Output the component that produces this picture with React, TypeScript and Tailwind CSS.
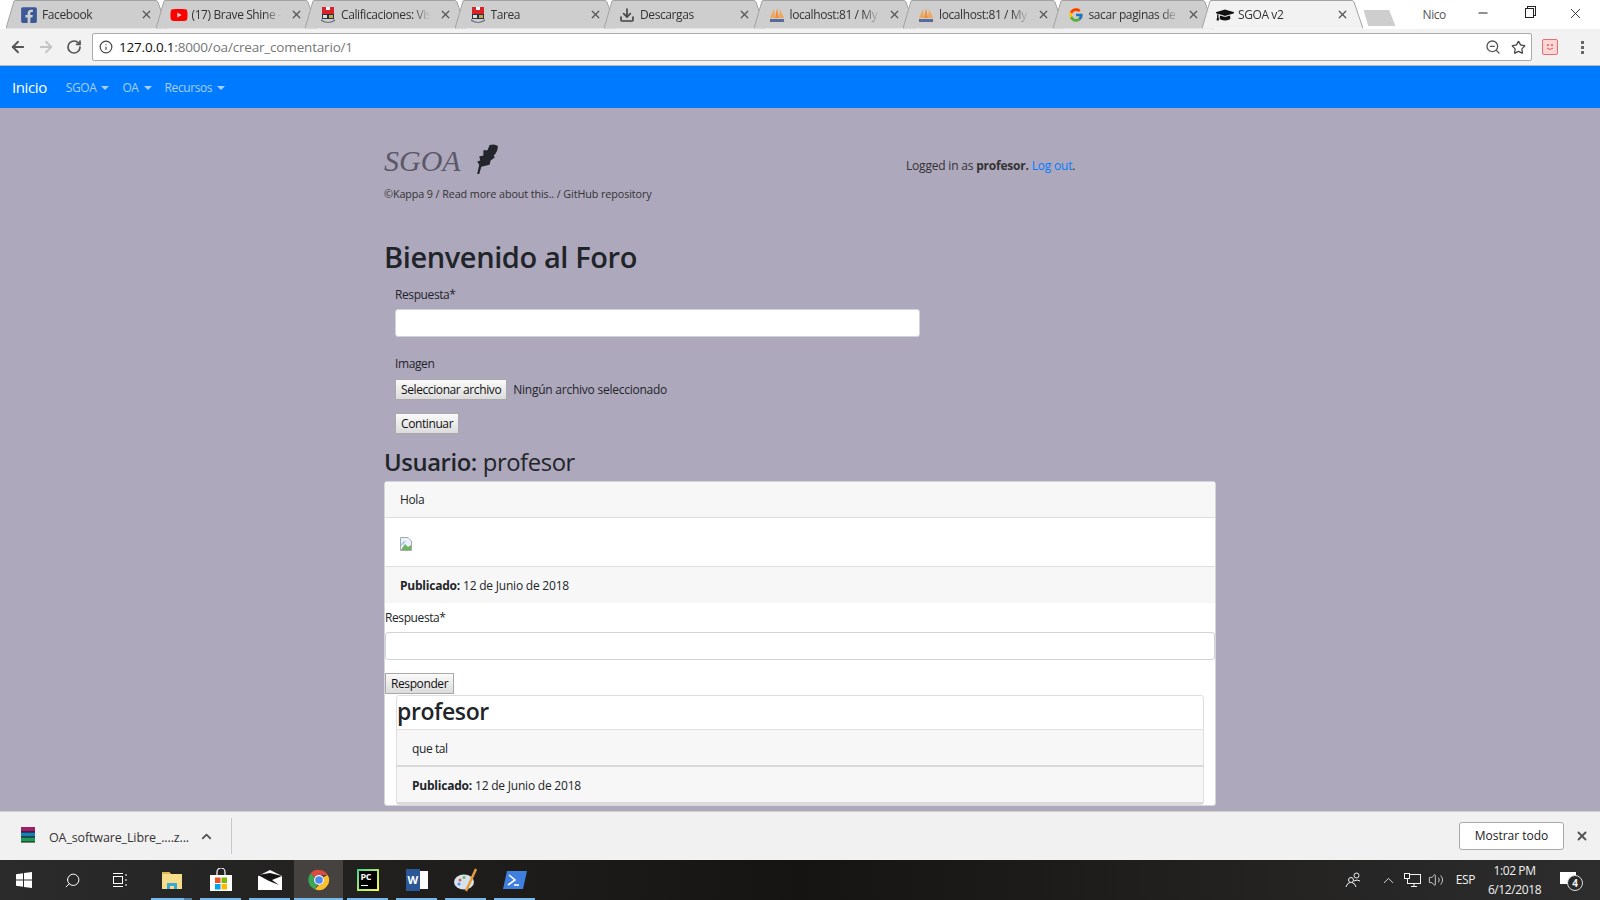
import React from 'react';
import { FaFacebookSquare, FaGraduationCap, FaYoutube } from 'react-icons/fa';
import { FcGoogle } from 'react-icons/fc';
import { ArrowLeft, ArrowRight, ChevronUp, Download, Info, RotateCw, Search, Star, Volume2, X, Minus, ZoomOut } from 'lucide-react';

function EspolIcon() {
  return (
    <svg width="16" height="18" viewBox="0 0 16 18">
      <rect x="2" y="1" width="12" height="7" fill="#d8232a" />
      <rect x="6" y="1" width="4" height="3" fill="#f4f4f4" />
      <rect x="2" y="8" width="12" height="5" fill="#24334f" />
      <rect x="3" y="9" width="4" height="3" fill="#e4e0c8" />
      <rect x="9" y="9" width="4" height="3" fill="#cfa93a" />
      <path d="M1 13 Q8 19 15 13 L15 15 Q8 19 1 15 Z" fill="#6e7780" />
    </svg>
  );
}

function PmaIcon() {
  return (
    <svg width="16" height="16" viewBox="0 0 16 16">
      <path d="M1 11 L5 2 L6 11 Z" fill="#f2a65a" />
      <path d="M6 11 L8 1 L10 11 Z" fill="#ef8f3c" />
      <path d="M10 11 L11 2 L15 11 Z" fill="#f2a65a" />
      <rect x="1" y="12" width="14" height="3" fill="#5a6a9a" />
    </svg>
  );
}

const tabs = [
  { title: 'Facebook', icon: <FaFacebookSquare size={18} color="#3b5998" /> },
  { title: '(17) Brave Shine -', icon: <FaYoutube size={18} color="#ff0000" /> },
  { title: 'Calificaciones: Vis', icon: <EspolIcon /> },
  { title: 'Tarea', icon: <EspolIcon /> },
  { title: 'Descargas', icon: <Download size={16} color="#444" strokeWidth={2.5} /> },
  { title: 'localhost:81 / My', icon: <PmaIcon /> },
  { title: 'localhost:81 / My', icon: <PmaIcon /> },
  { title: 'sacar paginas de', icon: <FcGoogle size={16} /> },
  { title: 'SGOA v2', icon: <FaGraduationCap size={18} color="#111" />, active: true },
];

function Tab({ title, icon, active }: { title: string; icon: React.ReactNode; active?: boolean }) {
  return (
    <div className="relative w-[161px] h-[29px] mr-[-11.5px] shrink-0 flex items-center pl-[14px] pr-[14px]">
      <svg className="absolute inset-0" width="161" height="29" viewBox="0 0 161 29">
        <path
          d="M0 28.5 L8 1 Q8.5 0.5 10 0.5 L150 0.5 Q151 0.5 152 2 L161 28.5"
          fill={active ? '#f2f2f2' : '#cecece'}
          stroke="#a3a3a3"
          strokeWidth="1"
        />
      </svg>
      <div className="relative w-[18px] flex justify-center shrink-0">{icon}</div>
      <span className="relative ml-[4px] w-[90px] whitespace-nowrap overflow-hidden text-[12px] text-[#333] [mask-image:linear-gradient(to_right,black_80%,transparent)]">
        {title}
      </span>
      <X className="relative ml-auto text-[#555]" size={13} strokeWidth={2.2} />
    </div>
  );
}

function TabStrip() {
  return (
    <div className="h-[29px] bg-white flex pl-[6px] relative shrink-0">
      {tabs.map((t, i) => (
        <Tab key={i} title={t.title} icon={t.icon} active={t.active} />
      ))}
      <div className="ml-[12px] mt-[10px] w-[32px] h-[16px] bg-[#cecece] [clip-path:polygon(0_0,80%_0,100%_100%,15%_100%)]" />
      <span className="ml-[27px] mt-[6px] text-[12px] text-[#555]">Nico</span>
      <div className="ml-auto flex items-start h-[29px] pr-[2px]">
        <div className="w-[46px] flex justify-center pt-[6px]"><Minus size={14} color="#222" /></div>
        <div className="w-[46px] flex justify-center pt-[8px]">
          <div className="w-[9px] h-[10px] border border-[#222] shadow-[2px_-2px_0_-1px_#fff,2px_-2px_0_0_#222]" />
        </div>
        <div className="w-[46px] flex justify-center pt-[5px]"><X size={17} color="#222" strokeWidth={1.2} /></div>
      </div>
    </div>
  );
}

function Toolbar() {
  return (
    <div className="h-[37px] shrink-0 bg-[#f2f2f2] border-b border-[#b8b8b8] flex items-center">
      <div className="w-[92px] flex items-center pl-[9px] gap-[10px]">
        <ArrowLeft size={18} color="#555" strokeWidth={2.4} />
        <ArrowRight size={18} color="#c4c4c4" strokeWidth={2.4} />
        <RotateCw size={16} color="#555" strokeWidth={2.6} className="ml-[1px]" />
      </div>
      <div className="w-[1440px] h-[28px] bg-white border border-[#ababab] rounded-[2px] flex items-center pl-[6px] pr-[5px]">
        <Info size={14} color="#444" />
        <span className="ml-[6px] text-[13.5px] tracking-[-0.18px] text-[#111]">
          127.0.0.1<span className="text-[#777]">:8000/oa/crear_comentario/1</span>
        </span>
        <div className="ml-auto flex items-center gap-[10px]">
          <ZoomOut size={16} color="#555" strokeWidth={2} />
          <Star size={15} color="#444" strokeWidth={2} />
        </div>
      </div>
      <div className="ml-[10px] w-[16px] h-[16px] border border-[#ee6b6b] bg-[#fbd7d7] rounded-[2px] flex items-center justify-center">
        <svg width="10" height="8" viewBox="0 0 10 8">
          <circle cx="3" cy="2" r="1" fill="#e25555" />
          <circle cx="7" cy="2" r="1" fill="#e25555" />
          <path d="M2 5 Q5 8 8 5" stroke="#e25555" fill="none" />
        </svg>
      </div>
      <div className="ml-[23px] flex flex-col gap-[2px]">
        <span className="w-[3px] h-[3px] bg-[#666]" />
        <span className="w-[3px] h-[3px] bg-[#666]" />
        <span className="w-[3px] h-[3px] bg-[#666]" />
      </div>
    </div>
  );
}

function NavDropdown({ label }: { label: string }) {
  return (
    <a className="flex items-center text-[12px] text-[#a6cffb]">
      {label}
      <span className="ml-[5px] w-0 h-0 border-x-[4px] border-x-transparent border-t-[4px] border-t-[#a6cffb]" />
    </a>
  );
}

function Navbar() {
  return (
    <nav className="h-[42px] shrink-0 bg-[#007bff] flex items-center pl-[12px] pt-[2px]">
      <a className="text-[15px] text-white mr-[19px] -mt-[2px]">Inicio</a>
      <div className="flex items-center gap-[13px]">
        <NavDropdown label="SGOA" />
        <NavDropdown label="OA" />
        <NavDropdown label="Recursos" />
      </div>
    </nav>
  );
}

function FormButton({ children }: { children: React.ReactNode }) {
  return (
    <button className="h-[21px] px-[5px] text-[12px] text-[#111] border border-[#a9a9a9] bg-linear-to-b from-[#fafafa] to-[#dcdcdc] whitespace-nowrap">
      {children}
    </button>
  );
}

function BrokenImage() {
  return (
    <svg width="12" height="14" viewBox="0 0 12 14">
      <path d="M0.5 0.5 H8 L11.5 4 V13.5 H0.5 Z" fill="#eaf1fb" stroke="#a8a8a8" />
      <path d="M1 13 L5 7 L8 10 L11 8 V13 Z" fill="#6cb45f" />
      <path d="M1 7 L4 4 L6 5 L1 9 Z" fill="#a9c8ee" />
    </svg>
  );
}

function Published({ className }: { className?: string }) {
  return (
    <div className={`text-[12px] tracking-[-0.018em] text-[#212529] ${className}`}>
      <b>Publicado:</b> 12 de Junio de 2018
    </div>
  );
}

function ForoPage() {
  return (
    <main className="flex-1 bg-[#aea8bd] overflow-hidden text-[#212529]">
      <div className="w-[832px] mx-auto">
        <header className="flex pt-[32px] h-[100px]">
          <div className="w-[522px]">
            <div className="flex items-start h-[42px]">
              <span className="text-[30px] leading-[42px] italic tracking-normal text-[#5b5868] [font-family:'Liberation_Serif',serif]">SGOA</span>
              <svg className="ml-[15px] mt-[4px]" width="22" height="30" viewBox="0 0 21 29" fill="#22262c">
                <path d="M1 29 L3 20 L1 17 L4 16 L3 12 L7 11 L7 6 L11 6 L13 1 Q18 -0.5 21 2 Q21 8 17 11 L18 13 L14 16 L13 20 L9 21 L5 22 L3 29 Z" />
              </svg>
            </div>
            <p className="text-[10.8px] mt-[4px] tracking-[-0.01em] text-[#333]">©Kappa 9 / Read more about this.. / GitHub repository</p>
          </div>
          <p className="text-[12px] mt-[17px] tracking-[-0.2px] text-[#333]">
            Logged in as <b>profesor.</b> <a className="text-[#007bff]">Log out</a>.
          </p>
        </header>

        <h2 className="text-[29px] leading-[36px] font-semibold mt-[31px]">Bienvenido al Foro</h2>

        <form className="pl-[11px] w-[536px]">
          <label className="block text-[12px] mt-[11px] leading-[18px]">Respuesta*</label>
          <input className="block w-[525px] h-[28px] mt-[5px] bg-white border border-[#ced4da] rounded-[3px]" />
          <label className="block text-[12px] mt-[18px] leading-[18px]">Imagen</label>
          <div className="flex items-center mt-[6px] text-[12px]">
            <FormButton>Seleccionar archivo</FormButton>
            <span className="ml-[6px] tracking-[-0.02em]">Ningún archivo seleccionado</span>
          </div>
          <div className="flex mt-[13px]">
            <FormButton>Continuar</FormButton>
          </div>
        </form>

        <h4 className="text-[23.8px] leading-[28px] mt-[14px]"><b className="font-semibold">Usuario:</b> profesor</h4>

        <section className="mt-[5px] h-[325px] bg-white border border-[#d6d5da] rounded-[3px] overflow-hidden">
          <div className="h-[36px] bg-[#f7f7f7] border-b border-[#dcdcdc] flex items-center pl-[15px] text-[12px]">Hola</div>
          <div className="h-[48px] flex items-center pl-[15px] pt-[3px]"><BrokenImage /></div>
          <Published className="h-[37px] bg-[#f7f7f7] border-t border-[#e0e0e0] flex items-center gap-[3px] pl-[15px] pt-[2px]" />

          <label className="block text-[12px] mt-[6px] leading-[18px]">Respuesta*</label>
          <input className="block w-full h-[28px] mt-[5px] bg-white border border-[#ced4da] rounded-[3px]" />
          <div className="flex mt-[13px] h-[22px]">
            <FormButton>Responder</FormButton>
          </div>

          <div className="mx-[11px] border border-[#dedede] rounded-[3px] h-[110px]">
            <h3 className="text-[23px] leading-[30px] h-[34px] font-semibold border-b border-[#e0e0e0] text-[#212529]">profesor</h3>
            <div className="h-[37px] bg-[#f7f7f7] border-b-2 border-[#dadada] flex items-center pl-[15px] pt-[2px] text-[12px]">que tal</div>
            <Published className="h-[37px] bg-[#f7f7f7] border-b-2 border-[#dadada] flex items-center gap-[3px] pl-[15px] pt-[2px]" />
          </div>
        </section>
      </div>
    </main>
  );
}

function DownloadBar() {
  return (
    <div className="h-[49px] shrink-0 bg-[#f1f1f1] border-t border-[#d0d0d0] flex items-center">
      <svg className="ml-[20px] mb-[3px]" width="16" height="17" viewBox="0 0 16 17">
        <rect x="1" y="1" width="14" height="5" fill="#9b1f6b" />
        <rect x="1" y="6" width="14" height="5" fill="#1a7fb8" />
        <rect x="1" y="11" width="14" height="5" fill="#1f9b57" />
        <path d="M1 6H15M1 11H15M1 16H15" stroke="#111" />
      </svg>
      <span className="ml-[13px] w-[140px] pt-[5px] text-[12.5px] tracking-[-0.01em] text-[#333]">OA_software_Libre_....z...</span>
      <ChevronUp className="ml-[10px]" size={15} color="#555" strokeWidth={3} />
      <div className="ml-[17px] w-px h-[36px] bg-[#c8c8c8]" />
      <button className="ml-auto w-[105px] h-[28px] bg-white border border-[#a8a8a8] rounded-[3px] text-[12px] tracking-normal text-[#222]">Mostrar todo</button>
      <X className="ml-[11px] mr-[11px]" size={14} color="#555" strokeWidth={3.2} />
    </div>
  );
}

function ChromeIcon() {
  return (
    <svg width="22" height="22" viewBox="0 0 24 24">
      <path d="M12 1 A11 11 0 0 1 21.5 6.5 L12 6.5 A5.5 5.5 0 0 0 7 9.5 L3 4.5 A11 11 0 0 1 12 1 Z" fill="#dd4b3e" />
      <path d="M3 4.5 L7 9.5 A5.5 5.5 0 0 0 10.5 17.5 L7.5 22 A11 11 0 0 1 3 4.5 Z" fill="#3aa757" />
      <path d="M21.5 6.5 A11 11 0 0 1 7.5 22 L12 17.5 A5.5 5.5 0 0 0 16.5 9 Z" fill="#fbc02d" />
      <circle cx="12" cy="12" r="5.5" fill="#fff" />
      <circle cx="12" cy="12" r="4.2" fill="#4d8bf0" />
    </svg>
  );
}

function TaskbarApp({ children, active, split }: { children: React.ReactNode; active?: boolean; split?: boolean }) {
  return (
    <div className={`relative w-[49px] h-[40px] flex items-center justify-center ${active ? 'bg-[#45423f]' : ''}`}>
      {children}
      <span className={`absolute bottom-0 h-[2px] bg-[#76b9ed] ${active ? 'inset-x-0' : 'inset-x-[4px]'}`} />
      {split && <span className="absolute bottom-0 right-[4px] w-[8px] h-[2px] bg-[#4f7fa3]" />}
    </div>
  );
}

function Taskbar() {
  return (
    <footer className="h-[40px] shrink-0 bg-linear-to-r from-[#2b2b2b] via-[#161412] to-[#2d2d2d] flex items-center text-white">
      <div className="w-[48px] flex justify-center">
        <svg width="16" height="16" viewBox="0 0 16 16" fill="#fff">
          <path d="M0 2.2 L7 1.2 V7.5 H0 Z M8 1 L16 0 V7.5 H8 Z M0 8.5 H7 V14.8 L0 13.8 Z M8 8.5 H16 V16 L8 15 Z" />
        </svg>
      </div>
      <div className="w-[48px] flex justify-center"><Search size={17} color="#fff" strokeWidth={1.4} className="scale-x-[-1]" /></div>
      <div className="w-[48px] flex justify-center">
        <svg width="16" height="16" viewBox="0 0 16 16" fill="none" stroke="#fff" strokeWidth="1">
          <rect x="1.5" y="4.5" width="9" height="7" />
          <path d="M1 1.5H11M1 14.5H11M14 2V4M14 7V9M14 12V14" />
        </svg>
      </div>
      <div className="ml-[3px] flex">
        <TaskbarApp split>
          <svg width="22" height="20" viewBox="0 0 22 20">
            <path d="M1 2 H8 L10 4 H21 V19 H1 Z" fill="#f7dc8a" />
            <path d="M6 19 V13 H16 V19 H13 V16 H9 V19 Z" fill="#38a9d9" />
            <path d="M1 2 H8 L10 4 H1 Z" fill="#e3b84e" />
          </svg>
        </TaskbarApp>
        <TaskbarApp>
          <svg width="24" height="24" viewBox="0 0 24 24">
            <path d="M8 8 V4 A4 4 0 0 1 16 4 V8" fill="none" stroke="#fff" strokeWidth="1.2" />
            <path d="M1 7 H23 V23 H1 Z" fill="#fff" />
            <rect x="6" y="9.5" width="5.5" height="5.5" fill="#f25022" />
            <rect x="12.5" y="9.5" width="5.5" height="5.5" fill="#7fba00" />
            <rect x="6" y="16" width="5.5" height="5.5" fill="#00a4ef" />
            <rect x="12.5" y="16" width="5.5" height="5.5" fill="#ffb900" />
          </svg>
        </TaskbarApp>
        <TaskbarApp>
          <svg width="24" height="20" viewBox="0 0 24 20">
            <path d="M0 6 L12 0 L24 6 V20 H0 Z" fill="#fff" />
            <path d="M0 5 L12 3 L24 6 L14 10 L21 15 L11 11 Z" fill="#161412" />
          </svg>
        </TaskbarApp>
        <TaskbarApp active><ChromeIcon /></TaskbarApp>
        <TaskbarApp>
          <div className="w-[22px] h-[22px] bg-linear-to-br from-[#21d789] to-[#fcf84a] p-[2px]">
            <div className="w-full h-full bg-black text-[9px] leading-[10px] font-bold pl-[2px] pt-[1px] text-white">
              PC
              <div className="w-[7px] h-[1px] bg-white mt-[3px]" />
            </div>
          </div>
        </TaskbarApp>
        <TaskbarApp>
          <div className="relative w-[22px] h-[22px] flex items-center justify-end">
            <div className="w-[14px] h-[18px] bg-white" />
            <div className="absolute left-0 w-[14px] h-[22px] bg-[#2b5797] text-[11px] leading-[22px] font-bold text-center">W</div>
          </div>
        </TaskbarApp>
        <TaskbarApp>
          <svg width="24" height="24" viewBox="0 0 24 24">
            <ellipse cx="10" cy="14" rx="10" ry="7.5" fill="#d7e3ec" />
            <circle cx="6" cy="12" r="1.5" fill="#e0584f" />
            <circle cx="10" cy="9.5" r="1.5" fill="#6cb45f" />
            <circle cx="5" cy="16" r="1.5" fill="#4d8bf0" />
            <path d="M22 1 L12 23" stroke="#e79a3c" strokeWidth="2.5" />
          </svg>
        </TaskbarApp>
        <TaskbarApp>
          <svg width="24" height="18" viewBox="0 0 24 18">
            <path d="M4 0 H24 L20 18 H0 Z" fill="#3f7fe0" />
            <path d="M6 4 L12 9 L5 14" fill="none" stroke="#fff" strokeWidth="1.6" />
            <path d="M11 14 H16" stroke="#fff" strokeWidth="1.6" />
          </svg>
        </TaskbarApp>
      </div>

      <div className="ml-auto flex items-center text-[12px] text-[#f2f2f2]">
        <svg width="16" height="16" viewBox="0 0 16 16" fill="none" stroke="#f2f2f2" strokeWidth="1">
          <circle cx="6" cy="8" r="2.5" />
          <path d="M1 15 Q2 11 5 10.5 M7 10.5 Q10 11 11 15" />
          <circle cx="11.5" cy="3.5" r="2.5" />
          <path d="M9 9 Q12 7 15 9" />
        </svg>
        <ChevronUp className="ml-[19px]" size={17} strokeWidth={1.2} />
        <svg className="ml-[7px]" width="17" height="15" viewBox="0 0 17 15" fill="none" stroke="#f2f2f2" strokeWidth="1">
          <rect x="3.5" y="1.5" width="13" height="9" />
          <path d="M7 13.5H13M10 10.5V13.5" />
          <rect x="0.5" y="0.5" width="5" height="5" fill="#222" />
        </svg>
        <Volume2 className="ml-[7px]" size={16} strokeWidth={1.2} />
        <span className="ml-[12px]">ESP</span>
        <div className="ml-[12px] w-[55px] text-center text-[12px] leading-[19px]">
          <div>1:02 PM</div>
          <div>6/12/2018</div>
        </div>
        <div className="relative ml-[18px] mr-[22px] w-[18px] h-[18px]">
          <div className="w-[16px] h-[12px] bg-white mt-[1px]" />
          <span className="absolute left-[7px] top-[4px] w-[16px] h-[16px] rounded-full border border-[#ddd] bg-[#2a2a2a] text-[10px] leading-[14px] font-bold text-center">4</span>
        </div>
      </div>
    </footer>
  );
}

export default function App() {
  return (
    <div className="w-[1600px] h-[900px] flex flex-col overflow-hidden tracking-[-0.025em] [font-family:'Open_Sans','Liberation_Sans',sans-serif]">
      <TabStrip />
      <Toolbar />
      <Navbar />
      <ForoPage />
      <DownloadBar />
      <Taskbar />
    </div>
  );
}
